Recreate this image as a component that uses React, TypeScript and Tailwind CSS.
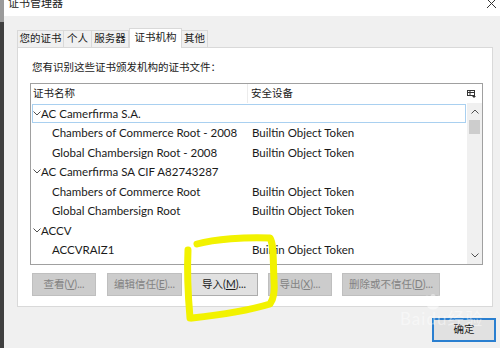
import React from 'react';

type Row = { kind: 'parent' | 'child'; name: string; device?: string; focus?: boolean };

const rows: Row[] = [
  { kind: 'parent', name: 'AC Camerfirma S.A.', focus: true },
  { kind: 'child', name: 'Chambers of Commerce Root - 2008', device: 'Builtin Object Token' },
  { kind: 'child', name: 'Global Chambersign Root - 2008', device: 'Builtin Object Token' },
  { kind: 'parent', name: 'AC Camerfirma SA CIF A82743287' },
  { kind: 'child', name: 'Chambers of Commerce Root', device: 'Builtin Object Token' },
  { kind: 'child', name: 'Global Chambersign Root', device: 'Builtin Object Token' },
  { kind: 'parent', name: 'ACCV' },
  { kind: 'child', name: 'ACCVRAIZ1', device: 'Builtin Object Token' },
  { kind: 'parent', name: 'Actalis S.p.A./03358520967' },
];

const tabs = [
  { label: '您的证书', w: 'w-[47px]' },
  { label: '个人', w: 'w-[29px]' },
  { label: '服务器', w: 'w-[38px]' },
  { label: '证书机构', w: 'w-[53px]', active: true },
  { label: '其他', w: 'w-[27px]' },
];

function Chevron({ up = false }: { up?: boolean }) {
  return (
    <svg width="8" height="5" viewBox="0 0 8 5" className="shrink-0">
      <path
        d={up ? 'M0.5 4.5 L4 1 L7.5 4.5' : 'M0.5 0.5 L4 4 L7.5 0.5'}
        fill="none"
        stroke="#505050"
        strokeWidth="1"
      />
    </svg>
  );
}

function Btn({
  label,
  hot,
  w,
  className = '',
  enabled = false,
}: {
  label: string;
  hot: string;
  w: string;
  className?: string;
  enabled?: boolean;
}) {
  return (
    <div
      className={`flex h-[23px] ${w} items-center justify-center border text-[10.5px] ${
        enabled
          ? 'border-[#adadad] bg-[#e1e1e1] text-[#1a1a1a]'
          : 'border-[#bfbfbf] bg-[#cccccc] text-[#838383]'
      } ${className}`}
    >
      <span>
        {label}(<span className="underline">{hot}</span>)...
      </span>
    </div>
  );
}

export default function App() {
  return (
    <div className="relative flex h-[348px] w-[500px] overflow-hidden bg-[#f0f0f0] font-['Lato','Noto_Sans_CJK_SC',sans-serif] text-[#1a1a1a]">
      {/* screen edge */}
      <div className="flex w-[4px] flex-col">
        <div className="h-[22px] bg-[#9a9a9a]" />
        <div className="flex-1 bg-[#3f3f3f]" />
      </div>

      <div className="flex w-[496px] flex-col">
        {/* title bar */}
        <div className="flex h-[16px] items-start justify-between overflow-hidden bg-white">
          <span className="-mt-[3px] pl-[4px] text-[11px] leading-[12px] text-[#222]">证书管理器</span>
          <svg width="11" height="11" viewBox="0 0 11 11" className="-mt-[2px] mr-[3px]">
            <path d="M1 1 L10 10 M10 1 L1 10" stroke="#333" strokeWidth="1" />
          </svg>
        </div>

        <div className="flex flex-col pl-[13px] pt-[12px]">
          {/* tabs */}
          <div className="flex h-[19px] items-end">
            {tabs.map(t =>
              t.active ? (
                <div
                  key={t.label}
                  className={`relative z-10 -mb-px flex h-[20px] ${t.w} items-center justify-center border border-b-0 border-[#d9d9d9] bg-white pb-[1px] text-[10.5px]`}
                >
                  {t.label}
                </div>
              ) : (
                <div
                  key={t.label}
                  className={`-ml-px flex h-[17px] ${t.w} items-center justify-center border border-b-0 border-[#d9d9d9] bg-[#f0f0f0] text-[10.5px] first:ml-0`}
                >
                  {t.label}
                </div>
              )
            )}
          </div>

          {/* tab panel */}
          <div className="flex h-[260px] w-[476px] flex-col border border-[#d9d9d9] bg-white pl-[12px] pt-[11px]">
            <div className="h-[16px] pl-[2px] text-[10.5px] leading-[16px]">您有识别这些证书颁发机构的证书文件：</div>

            {/* list */}
            <div className="mt-[8px] flex h-[182px] w-[453px] flex-col overflow-hidden border border-[#a0a0a0] bg-white">
              <div className="flex h-[19px] shrink-0 items-center text-[10.5px]">
                <div className="w-[217px] border-r border-[#ececec] pl-[2px] leading-[19px]">证书名称</div>
                <div className="flex-1 pl-[3px] leading-[19px]">安全设备</div>
                <svg width="9" height="8" viewBox="0 0 9 8" className="mr-[6px]">
                  <rect x="0.5" y="0.5" width="7" height="5" fill="none" stroke="#333" />
                  <path d="M0.5 2.5 H7.5 M3 0.5 V5.5" stroke="#333" />
                  <path d="M5 6 H9 L7 8 Z" fill="#333" />
                </svg>
              </div>
              <div className="flex min-h-0 flex-1">
                <div className="w-[436px] overflow-hidden pt-[0.5px]">
                  {rows.map((r, i) => (
                    <div
                      key={i}
                      className={`ml-px flex h-[19.5px] w-[434px] items-center border text-[11.5px] ${
                        r.focus ? 'border-[#a9d0f0]' : 'border-transparent'
                      }`}
                    >
                      {r.kind === 'parent' ? (
                        <div className="flex items-center">
                          <Chevron />
                          <span className="whitespace-nowrap">{r.name}</span>
                        </div>
                      ) : (
                        <>
                          <span className="w-[219px] shrink-0 whitespace-nowrap pl-[19px]">{r.name}</span>
                          <span className="whitespace-nowrap">{r.device}</span>
                        </>
                      )}
                    </div>
                  ))}
                </div>
                {/* scrollbar */}
                <div className="flex w-[15px] flex-col bg-[#f0f0f0]">
                  <div className="flex h-[17px] items-center justify-center">
                    <Chevron up />
                  </div>
                  <div className="mx-[2px] h-[14px] bg-[#cdcdcd]" />
                  <div className="flex-1" />
                  <div className="flex h-[17px] items-center justify-center">
                    <Chevron />
                  </div>
                </div>
              </div>
            </div>

            {/* buttons */}
            <div className="mt-[8px] flex pl-[2px]">
              <Btn label="查看" hot="V" w="w-[64px]" />
              <Btn label="编辑信任" hot="E" w="w-[75px]" className="ml-[11px]" />
              <Btn label="导入" hot="M" w="w-[68px]" className="ml-[8px]" enabled />
              <Btn label="导出" hot="X" w="w-[64px]" className="ml-[10px]" />
              <Btn label="删除或不信任" hot="D" w="w-[98px]" className="ml-[10px]" />
            </div>
          </div>

          {/* OK */}
          <div className="mt-[11px] flex justify-end pr-[4px]">
            <div className="flex h-[24px] w-[64px] items-center justify-center border-2 border-[#2a7fd0] bg-[#e1e1e1] text-[10.5px]">
              确定
            </div>
          </div>
        </div>
      </div>

      {/* baidu watermark, faint */}
      <div className="pointer-events-none absolute left-[400px] top-[294px] flex flex-col items-start text-white/45">
        <svg width="22" height="16" viewBox="0 0 22 16" className="ml-[22px]">
          <circle cx="5" cy="4" r="2.5" fill="rgba(255,255,255,0.45)" />
          <circle cx="11" cy="2.5" r="2.5" fill="rgba(255,255,255,0.45)" />
          <circle cx="17" cy="4" r="2.5" fill="rgba(255,255,255,0.45)" />
          <ellipse cx="11" cy="11" rx="6" ry="4.5" fill="rgba(255,255,255,0.45)" />
        </svg>
        <span className="text-[17px] leading-[17px] tracking-[1px]">Baidu经验</span>
      </div>

      {/* yellow marker annotation */}
      <svg className="pointer-events-none absolute left-0 top-0" width="500" height="348" viewBox="0 0 500 348">
        <path
          d="M197 244 C215 239 245 237 270 238 C274 244 273 262 274 280 C275 292 273 300 270 304 C250 310 220 315 192 318"
          fill="none"
          stroke="#f2f200"
          strokeWidth="7"
          strokeLinecap="round"
          strokeLinejoin="round"
        />
        <path d="M188 250 C187 270 188 295 190 318" fill="none" stroke="#f2f200" strokeWidth="7" strokeLinecap="round" />
      </svg>
    </div>
  );
}
